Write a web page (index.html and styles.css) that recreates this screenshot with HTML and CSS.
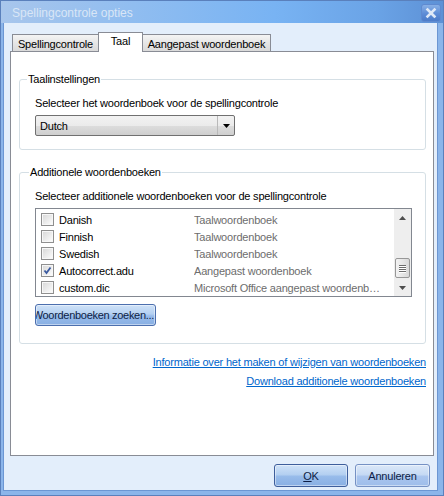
FILE: index.html
```html
<!DOCTYPE html>
<html>
<head>
<meta charset="utf-8">
<link rel="stylesheet" href="styles.css">
</head>
<body>
<div class="window">
  <div class="titlebar">
    <span class="title">Spellingcontrole opties</span>
    <span class="close">
      <svg width="18" height="16" viewBox="0 0 18 16"><path d="M5.5 4.5 L12.5 11.5 M12.5 4.5 L5.5 11.5" stroke="#dfe9f7" stroke-width="2.6" stroke-linecap="square"/></svg>
    </span>
  </div>
  <div class="client">
    <div class="tabs">
      <div class="tab t1">Spellingcontrole</div>
      <div class="tab active t2">Taal</div>
      <div class="tab t3">Aangepast woordenboek</div>
    </div>
    <div class="panel">
      <fieldset class="group g1">
        <legend>Taalinstellingen</legend>
        <div class="label">Selecteer het woordenboek voor de spellingcontrole</div>
        <div class="combo">
          <span class="combo-text">Dutch</span>
          <span class="combo-btn"><svg width="7" height="4" viewBox="0 0 7 4"><path d="M0 0 H7 L3.5 4 Z" fill="#000"/></svg></span>
        </div>
      </fieldset>
      <fieldset class="group g2">
        <legend>Additionele woordenboeken</legend>
        <div class="label">Selecteer additionele woordenboeken voor de spellingcontrole</div>
        <div class="list">
          <div class="rows">
            <div class="row"><span class="cb"></span><span class="name">Danish</span><span class="type">Taalwoordenboek</span></div>
            <div class="row"><span class="cb"></span><span class="name">Finnish</span><span class="type">Taalwoordenboek</span></div>
            <div class="row"><span class="cb"></span><span class="name">Swedish</span><span class="type">Taalwoordenboek</span></div>
            <div class="row"><span class="cb checked"><svg width="11" height="11" viewBox="0 0 11 11"><path d="M2.5 5.5 L4.5 8 L8.5 2.5" stroke="#3b5aa0" stroke-width="1.8" fill="none"/></svg></span><span class="name">Autocorrect.adu</span><span class="type">Aangepast woordenboek</span></div>
            <div class="row"><span class="cb"></span><span class="name">custom.dic</span><span class="type">Microsoft Office aangepast woordenboek</span></div>
          </div>
          <div class="scrollbar">
            <div class="sb-arrow"><svg width="7" height="4" viewBox="0 0 7 4"><path d="M0 4 H7 L3.5 0 Z" fill="#4d4d4d"/></svg></div>
            <div class="sb-track">
              <div class="sb-thumb"><span></span><span></span><span></span><span></span></div>
            </div>
            <div class="sb-arrow"><svg width="7" height="4" viewBox="0 0 7 4"><path d="M0 0 H7 L3.5 4 Z" fill="#4d4d4d"/></svg></div>
          </div>
        </div>
        <div class="btn find"><span>Woordenboeken zoeken...</span></div>
      </fieldset>
      <div class="links">
        <a href="#">Informatie over het maken of wijzigen van woordenboeken</a>
        <a href="#">Download additionele woordenboeken</a>
      </div>
    </div>
    <div class="footer">
      <div class="btn ok"><span><u>O</u>K</span></div>
      <div class="btn cancel"><span>Annuleren</span></div>
    </div>
  </div>
</div>
</body>
</html>
```

FILE: styles.css
```css
html, body {
  margin: 0;
  padding: 0;
  background: #ffffff;
}

body {
  font-family: "Liberation Sans", Arial, sans-serif;
  font-size: 11px;
  letter-spacing: -0.2px;
  color: #000;
}

.window {
  width: 444px;
  height: 496px;
  box-sizing: border-box;
  background: #8bb5ea;
  border: 1px solid #5a80bc;
  display: flex;
  flex-direction: column;
  overflow: hidden;
}

.titlebar {
  height: 22px;
  flex: none;
  display: flex;
  align-items: center;
  justify-content: space-between;
  background: linear-gradient(to right, #a8c6ec 0%, #90bdf0 30%, #78b3f3 62%, #6aa3e6 85%, #5d91d6 100%);
  padding: 0 2px 0 11px;
}

.title {
  font-size: 12px;
  letter-spacing: 0;
  color: #d9e6f6;
  padding-top: 1px;
}

.close {
  width: 18px;
  height: 16px;
  display: flex;
  align-items: center;
  justify-content: center;
  border-radius: 3px;
  border: 1px solid #5f8ad0;
  background: linear-gradient(#88b0e6, #5d8cd6 55%, #4c7cc9);
  margin-top: 2px;
}

.client {
  flex: 1;
  background: #e3eefb;
  margin: 0 5px 4px 2px;
  border: 1px solid #6b96d3;
  border-top: none;
  display: flex;
  flex-direction: column;
  padding: 9px 3px 0 6px;
}

.tabs {
  display: flex;
  align-items: flex-end;
  height: 20px;
  padding-left: 2px;
  margin-bottom: -1px;
  position: relative;
  z-index: 1;
}

.tab {
  box-sizing: border-box;
  height: 17px;
  margin-bottom: 1px;
  border: 1px solid #898c95;
  border-bottom: none;
  background: linear-gradient(#f4f4f4, #e6e6e6 50%, #dadada);
  display: flex;
  align-items: center;
  justify-content: center;
  padding-top: 1px;
  white-space: nowrap;
}

.tab + .tab {
  margin-left: -1px;
}

.t1 { width: 87px; }
.t2 { width: 45px; }
.t3 { width: 129px; }

.tab.active {
  height: 20px;
  margin-bottom: 0;
  background: #ffffff;
  padding-top: 0;
  padding-bottom: 4px;
}

.panel {
  width: 424px;
  height: 405px;
  box-sizing: border-box;
  background: #ffffff;
  border: 1px solid #898c95;
  padding: 21px 7px 0 8px;
}

.group {
  margin: 0;
  border: 1px solid #d5dfe5;
  border-radius: 3px;
  padding: 11px 12px 13px 15px;
  min-width: 0;
}

.group legend {
  padding: 0 1px;
  margin-left: -8px;
  line-height: 13px;
}

.g2 legend {
  margin-left: -6px;
}

.g2 {
  margin-top: 16px;
  padding-bottom: 17px;
}

.label {
  line-height: 13px;
}

.combo {
  margin-top: 5px;
  width: 200px;
  height: 21px;
  box-sizing: border-box;
  border: 1px solid #707070;
  border-radius: 2px;
  background: linear-gradient(#f2f2f2, #ebebeb 50%, #dddddd 51%, #cfcfcf);
  display: flex;
  align-items: center;
  justify-content: space-between;
}

.combo-text {
  padding-left: 4px;
}

.combo-btn {
  width: 17px;
  height: 19px;
  display: flex;
  align-items: center;
  justify-content: center;
  border-left: 1px solid #b9b9b9;
  box-sizing: border-box;
}

.list {
  margin-top: 5px;
  width: 377px;
  height: 89px;
  box-sizing: border-box;
  border: 1px solid #828790;
  display: flex;
}

.rows {
  flex: 1;
  padding: 2px 0 0 5px;
  min-width: 0;
}

.row {
  height: 17px;
  display: flex;
  align-items: center;
}

.cb {
  width: 13px;
  height: 13px;
  flex: none;
  box-sizing: border-box;
  border: 1px solid #8f8f8f;
  background: linear-gradient(135deg, #d6d6d6, #f2f2f2 70%, #ffffff);
  box-shadow: inset 0 0 0 1px #f7f7f7;
  display: flex;
  align-items: center;
  justify-content: center;
}

.name {
  width: 135px;
  flex: none;
  padding-left: 5px;
}

.type {
  color: #6d6d6d;
  white-space: nowrap;
  overflow: hidden;
  text-overflow: ellipsis;
  padding-right: 12px;
}

.scrollbar {
  width: 17px;
  flex: none;
  background: #eeeeee;
  display: flex;
  flex-direction: column;
}

.sb-arrow {
  height: 17px;
  display: flex;
  align-items: center;
  justify-content: center;
}

.sb-track {
  flex: 1;
  padding-top: 32px;
  display: flex;
  flex-direction: column;
  align-items: center;
}

.sb-thumb {
  width: 15px;
  height: 20px;
  box-sizing: border-box;
  border: 1px solid #979797;
  border-radius: 2px;
  background: linear-gradient(to right, #f3f3f3, #e6e6e6 50%, #d8d8d8);
  display: flex;
  flex-direction: column;
  align-items: center;
  justify-content: center;
  gap: 1px;
}

.sb-thumb span {
  width: 7px;
  height: 1px;
  background: #6b6b6b;
  box-shadow: 0 1px 0 #ffffff;
}

.btn {
  box-sizing: border-box;
  height: 22px;
  border: 1px solid #4c6fae;
  border-radius: 3px;
  background: linear-gradient(#cfe2f8, #b4d0f1 45%, #97bbea 55%, #88afe3);
  box-shadow: inset 0 0 0 1px rgba(255, 255, 255, 0.45);
  display: flex;
  align-items: center;
  overflow: hidden;
  white-space: nowrap;
  color: #0d1d45;
}

.find {
  margin-top: 7px;
  width: 121px;
  justify-content: flex-end;
  padding-right: 1px;
  letter-spacing: -0.3px;
}

.links {
  margin-top: 9px;
  display: flex;
  flex-direction: column;
  align-items: flex-end;
  padding-right: 0;
}

.links a {
  color: #0066cc;
  line-height: 19px;
  text-decoration: underline;
}

.footer {
  display: flex;
  justify-content: flex-end;
  gap: 7px;
  padding-top: 8px;
  padding-right: 4px;
}

.ok, .cancel {
  height: 23px;
  justify-content: center;
}

.ok {
  width: 74px;
  border-color: #3d5e9c;
}

.cancel {
  width: 75px;
  border-color: #7591c4;
  background: linear-gradient(#dbe8f8, #c6daf4 45%, #a9c5ee 55%, #9ebdea);
}
```
